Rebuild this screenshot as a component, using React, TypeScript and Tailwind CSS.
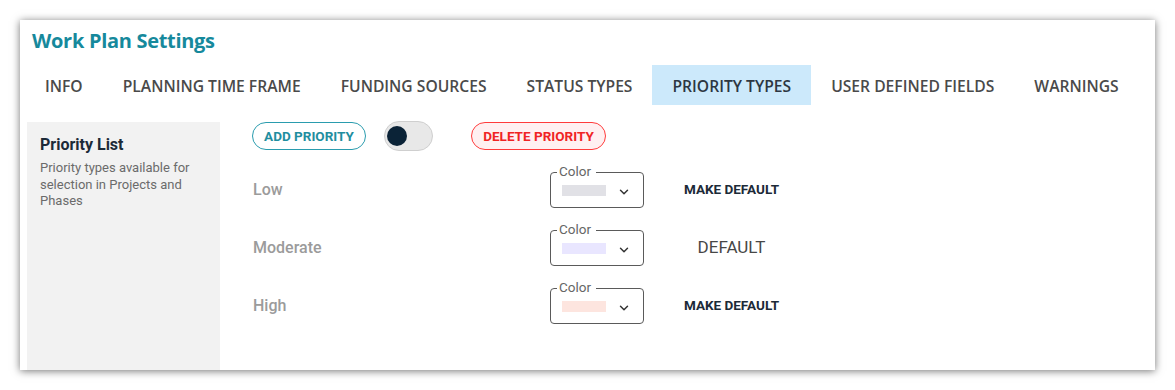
import { ChevronDown } from 'lucide-react';

const tabs = [
  'INFO',
  'PLANNING TIME FRAME',
  'FUNDING SOURCES',
  'STATUS TYPES',
  'PRIORITY TYPES',
  'USER DEFINED FIELDS',
  'WARNINGS',
];

const priorities = [
  { name: 'Low', swatch: 'bg-[#e1e1e6]', isDefault: false },
  { name: 'Moderate', swatch: 'bg-[#e9e6ff]', isDefault: true },
  { name: 'High', swatch: 'bg-[#fde5df]', isDefault: false },
];

const ColorSelect = ({ swatch }: { swatch: string }) => (
  <div className="relative w-[94px] h-[36px] border-[1.5px] border-[#5a5a5a] rounded-[4px] flex items-center justify-between pl-[11px] pr-[12px]">
    {/* floating label sitting on the border */}
    <span className="absolute -top-[10px] left-[6px] bg-white pl-[2px] pr-[5px] text-[13.5px] leading-[16px] text-[#666]">
      Color
    </span>
    <span className={`w-[44px] h-[11px] mt-[1px] ${swatch}`} />
    <ChevronDown size={14} strokeWidth={2.5} className="text-[#333] mt-[3px]" />
  </div>
);

export default function App() {
  return (
    <div className="bg-white w-[1175px] h-[390px] p-5" style={{ fontFamily: "Roboto, 'Liberation Sans', sans-serif" }}>
      <div className="w-[1135px] h-[350px] bg-white shadow-[0_1px_8px_rgba(0,0,0,0.55)] flex flex-col">
        {/* Header */}
        <h1 className="pl-3 pt-[7px] text-[20px] leading-[27px] font-bold text-[#16899c] font-['Open_Sans',sans-serif] tracking-[-0.3px]">
          Work Plan Settings
        </h1>

        {/* Tabs */}
        <div className="flex pl-[5px] mt-[11px] h-[40px]">
          {tabs.map((tab) => (
            <div
              key={tab}
              className={`px-5 pt-[3px] flex items-center text-[15.65px] font-semibold font-['Open_Sans',sans-serif] ${
                tab === 'PRIORITY TYPES' ? 'bg-[#cce9fb] text-[#2d3742]' : 'text-[#4a4a4a]'
              }`}
            >
              {tab}
            </div>
          ))}
        </div>

        {/* Body */}
        <div className="flex flex-1 mt-[17px] pl-[7px]">
          <div className="w-[193px] bg-[#f2f2f2] pl-[13px] pr-3 pt-[12px]">
            <div className="text-[16px] leading-[22px] font-bold text-[#1c2a38]">Priority List</div>
            <p className="mt-[4px] text-[13px] leading-[16.5px] text-[#6b6b6b]">
              Priority types available for selection in Projects and Phases
            </p>
          </div>

          <div className="flex-1 pl-[32px]">
            <div className="flex items-center h-[28px]">
              <button className="h-[28px] w-[114px] rounded-full border-[1.5px] border-[#2a9cae] text-[#1f8ea0] text-[13.5px] font-bold">
                ADD PRIORITY
              </button>
              <div className="ml-[18px] w-[49px] h-[30px] rounded-full bg-[#e8e8e8] border border-[#cfcfcf] flex items-center pl-[2px]">
                <span className="w-[20px] h-[20px] rounded-full bg-[#0b2337]" />
              </div>
              <button className="ml-[38px] h-[28px] w-[135px] rounded-full border-[1.5px] border-[#ff3b3b] bg-[#fff0f1] text-[#f02424] text-[13.5px] font-bold">
                DELETE PRIORITY
              </button>
            </div>

            <div className="mt-[22px] flex flex-col gap-[22px]">
              {priorities.map((p) => (
                <div key={p.name} className="flex items-center h-[36px]">
                  <div className="w-[298px] text-[16px] font-medium text-[#9b9b9b] pl-[1px]">{p.name}</div>
                  <ColorSelect swatch={p.swatch} />
                  <div className="ml-[38px] w-[99px] text-center">
                    {p.isDefault ? (
                      <span className="text-[17px] text-[#474747]">DEFAULT</span>
                    ) : (
                      <span className="text-[13.5px] font-bold text-[#1c2a38] relative -top-[1px]">MAKE DEFAULT</span>
                    )}
                  </div>
                </div>
              ))}
            </div>
          </div>
        </div>
      </div>
    </div>
  );
}
